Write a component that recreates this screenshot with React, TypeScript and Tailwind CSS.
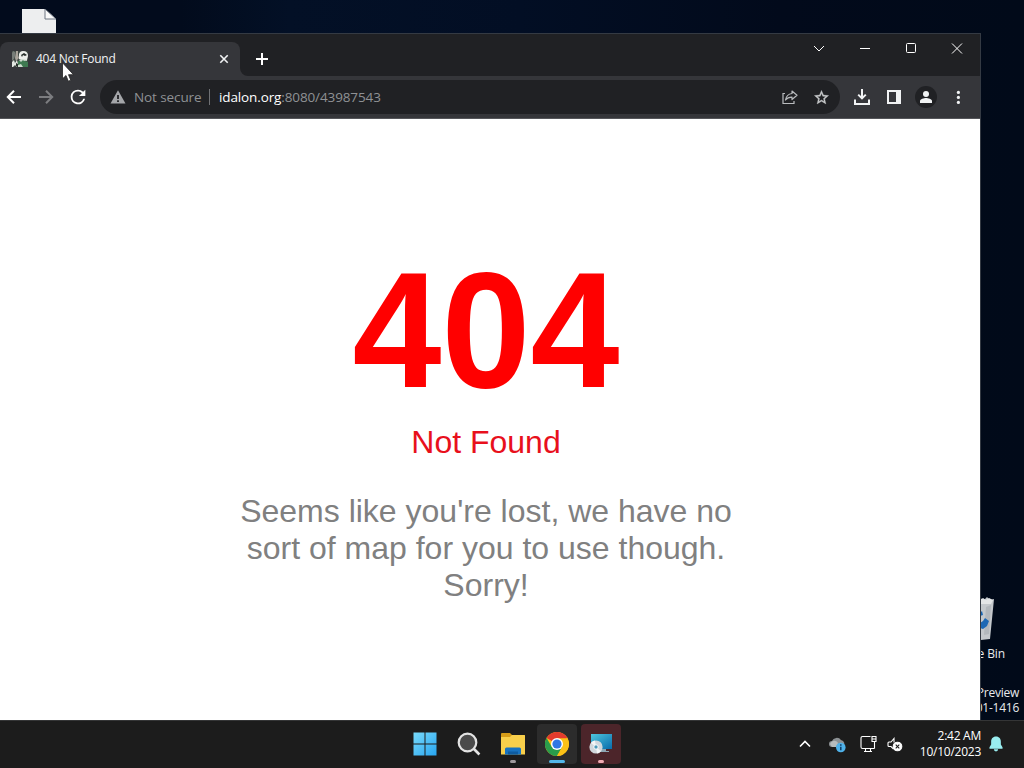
import type { ReactNode } from "react";

const chromeIconButton = "flex h-8 w-8 shrink-0 items-center justify-center text-[#f1f3f4]";

function Favicon() {
  return (
    <svg width="16" height="16" viewBox="0 0 16 16">
      <rect width="16" height="16" fill="#3e4742" />
      <path d="M1 0l2 1v4l-1 3-2 2V2z" fill="#777d78" />
      <path d="M4 0h2v4l1 3-3 3-1-3z" fill="#a9a49b" />
      <path d="M0 11l2-2 1 3 2-3 1 4-1 3-2-2-2 2H0z" fill="#e3e7e2" />
      <path d="M7 3q1-3 4-3 5 0 5 5l-1 4-3 1-5-2z" fill="#eef0ec" />
      <path d="M9 4l3-2 3 2-2 1-2-1-1 2z" fill="#252c28" />
      <path d="M6 10l4-1 6 2v5H6z" fill="#3f7a51" />
      <path d="M7 9l3-1 5 1v1l-4-1-2 2zM6 14l3-1 2 3H6z" fill="#cfdcd0" />
      <path d="M4 12l2 1v3l-2-1z" fill="#29332d" />
    </svg>
  );
}

function Cursor() {
  return (
    <svg className="absolute left-[62px] top-[62px] z-30" width="13" height="20" viewBox="0 0 13 20">
      <path d="M.5 .8v16l3.5-3.3 2.3 5.7 2.5-1-2.3-5.5h5z" fill="#fff" stroke="#222" strokeWidth=".8" />
    </svg>
  );
}

function TabStrip() {
  return (
    <div className="flex h-[42px] bg-[#202124]">
      <div className="mt-2 flex h-[34px] w-[240px] items-center rounded-t-lg bg-[#35363a] pl-3 pr-[10px] text-[#f1f3f4]">
        <Favicon />
        <span className="ml-2 flex-1 whitespace-nowrap text-[12px] tracking-[-0.25px]">404 Not Found</span>
        <svg width="12" height="12" viewBox="0 0 12 12" stroke="currentColor" strokeWidth="1.6">
          <path d="M2.3 2.3l7.4 7.4M9.7 2.3l-7.4 7.4" />
        </svg>
      </div>
      <svg className="mt-[34px]" width="8" height="8" viewBox="0 0 8 8">
        <path d="M0 0a8 8 0 0 0 8 8H0z" fill="#35363a" />
      </svg>
      <svg className="ml-[7px] mt-[18px]" width="14" height="14" viewBox="0 0 14 14" stroke="#fff" strokeWidth="2">
        <path d="M1 7h12M7 1v12" />
      </svg>
      <div className="ml-auto flex h-7 text-white">
        <WindowButton><path d="M1 4l5 5 5-5" /></WindowButton>
        <WindowButton><path d="M1 6.5h10" /></WindowButton>
        <WindowButton><rect x="1.5" y="1.5" width="9" height="9" rx="1" /></WindowButton>
        <WindowButton><path d="M1 1.5l10 10M11 1.5l-10 10" /></WindowButton>
      </div>
    </div>
  );
}

function WindowButton({ children }: { children: ReactNode }) {
  return (
    <button className="flex w-[46px] items-center justify-center">
      <svg width="13" height="13" viewBox="0 0 13 13" fill="none" stroke="currentColor">
        {children}
      </svg>
    </button>
  );
}

function Toolbar() {
  return (
    <div className="flex h-[43px] items-center border-b border-[#55565a] bg-[#35363a] pr-[6px]">
      <button className="flex w-7 justify-center text-white">
        <svg width="16" height="16" viewBox="0 0 16 16" fill="none" stroke="currentColor" strokeWidth="2">
          <path d="M15 8H2M8 1.8L1.8 8 8 14.2" />
        </svg>
      </button>
      <button className="ml-1 flex w-7 justify-center text-[#7c7d80]">
        <svg width="16" height="16" viewBox="0 0 16 16" fill="none" stroke="currentColor" strokeWidth="2">
          <path d="M1 8h13M8 1.8L14.2 8 8 14.2" />
        </svg>
      </button>
      <button className="ml-1 flex w-7 justify-center text-white">
        <svg width="22" height="22" viewBox="0 0 24 24" fill="currentColor">
          <path d="M17.65 6.35A7.96 7.96 0 0 0 12 4a8 8 0 1 0 7.73 10h-2.08A6 6 0 1 1 12 6c1.66 0 3.14.69 4.22 1.78L13 11h7V4z" />
        </svg>
      </button>

      <div className="ml-2 flex h-[34px] w-[740px] items-center rounded-full bg-[#202124] pl-[10px] pr-[2px]">
        <svg width="16" height="16" viewBox="0 0 16 16">
          <path d="M8 1.3L15.5 14.5H.5z" fill="#a4a6a9" />
          <path d="M8 6v4M8 11.2v1.8" stroke="#202124" strokeWidth="1.8" />
        </svg>
        <span className="ml-2 w-[68px] whitespace-nowrap text-[13.5px] tracking-[-0.1px] text-[#8f9194]">Not secure</span>
        <div className="ml-[7px] h-4 w-px bg-[#707174]" />
        <span className="ml-[9px] flex-1 whitespace-nowrap text-[13.5px] tracking-[-0.12px] text-[#8f9194]">
          <span className="text-white">idalon.org</span>:8080/43987543
        </span>
        <div className={chromeIconButton}>
          <svg width="16" height="16" viewBox="0 0 16 16" fill="none" stroke="#b9bbbe" strokeWidth="1.2">
            <path d="M3 4.5H1v10h11V12" />
            <path d="M10 2l5 4.3-5 4.2V8.1C7.2 8 5.2 8.8 3.5 11c.6-3.6 2.6-6 6.5-6.5z" strokeLinejoin="round" />
          </svg>
        </div>
        <div className={chromeIconButton}>
          <svg className="mr-px" width="17" height="17" viewBox="0 0 24 24" fill="#c8cacc" stroke="#c8cacc" strokeWidth=".5">
            <path d="M22 9.24l-7.19-.62L12 2 9.19 8.63 2 9.24l5.46 4.73L5.82 21 12 17.27 18.18 21l-1.63-7.03L22 9.24zM12 15.4l-3.76 2.27 1-4.28-3.32-2.88 4.38-.38L12 6.1l1.71 4.04 4.38.38-3.32 2.88 1 4.28L12 15.4z" />
          </svg>
        </div>
      </div>

      <div className="ml-[6px] flex">
        <button className={chromeIconButton}>
          <svg width="16" height="16" viewBox="0 0 16 16" fill="none" stroke="currentColor" strokeWidth="2">
            <path d="M8 0v9M4.2 5.6L8 9.4l3.8-3.8M1 10.5V15h14v-4.5" />
          </svg>
        </button>
        <button className={chromeIconButton}>
          <svg width="14" height="14" viewBox="0 0 14 14" fill="currentColor">
            <path d="M0 0h14v14H0zM2 2v10h7V2z" fillRule="evenodd" />
          </svg>
        </button>
        <button className={chromeIconButton}>
          <span className="flex h-[22px] w-[22px] items-center justify-center rounded-full bg-[#202124]">
            <svg width="12" height="12" viewBox="0 0 12 12" fill="currentColor">
              <circle cx="6" cy="3" r="3" />
              <path d="M0 12v-2c0-2 4-3 6-3s6 1 6 3v2z" />
            </svg>
          </span>
        </button>
        <button className={chromeIconButton}>
          <svg width="4" height="14" viewBox="0 0 4 14" fill="currentColor">
            <circle cx="2.4" cy="2.4" r="1.6" />
            <circle cx="2.4" cy="7.4" r="1.6" />
            <circle cx="2.4" cy="12.4" r="1.6" />
          </svg>
        </button>
      </div>
    </div>
  );
}

function ErrorPage() {
  return (
    <main className="h-[601px] bg-white pr-2 pt-[119px] text-center font-['Liberation_Sans',Arial,sans-serif]">
      <h1 className="scale-y-[1.035] text-[160px] font-bold leading-[184px] text-[#ff0000]">404</h1>
      <h2 className="mt-[2px] text-[32px] leading-[37px] text-[#e8101c]">Not Found</h2>
      <p className="mx-auto mt-8 w-[500px] text-[32px] leading-[37px] text-[#808080]">
        Seems like you're lost, we have no sort of map for you to use though. Sorry!
      </p>
    </main>
  );
}

function DesktopIcons() {
  return (
    <>
      <svg className="absolute left-[22px] top-[9px]" width="34" height="42" viewBox="0 0 34 42">
        <path d="M0 0h23l11 10v32H0z" fill="#edeeef" />
        <path d="M23 0v10h11z" fill="#f9f9f9" stroke="#6d7580" strokeWidth="1" />
      </svg>
      <svg className="absolute left-[953px] top-[595px]" width="41" height="46" viewBox="0 0 41 46">
        <path d="M0 5l27-2 4 2 3-3 3 3 4-1-4 40-9 1H5z" fill="#c4c8cc" />
        <path d="M27 5l3-2 3 2 3-2 4 2-2 4H27z" fill="#e3e5e6" />
        <path d="M33 12l5-2-2 29-5 1z" fill="#a6abb1" opacity=".6" />
        <path d="M27 18l2-2 1 4-3 1zM27 28l3-2 2-3 4 3-2 5-4 3-3-1z" fill="#1c68b5" />
      </svg>
      <span className="absolute right-[19px] top-[646px] whitespace-nowrap text-[12px] leading-4 tracking-[-0.1px] text-[#e8eaed]">
        Recycle Bin
      </span>
      <div className="absolute right-[5px] top-[685px] whitespace-nowrap text-right text-[12px] leading-[15px] tracking-[-0.25px] text-[#e8eaed]">
        <p>Preview</p>
        <p>01-1416</p>
      </div>
    </>
  );
}

function ChromeLogo() {
  return (
    <svg width="24" height="24" viewBox="0 0 24 24">
      <circle cx="12" cy="12" r="12" fill="#fbc116" />
      <path d="M12 12L1.6 6A12 12 0 0 1 22.4 6z" fill="#e33b2e" />
      <path d="M1.6 6A12 12 0 0 0 12 24l5.2-9L12 12 6.8 15z" fill="#2a9d4b" />
      <path d="M12 6.2h10.5A12 12 0 0 1 12 24l5.2-9z" fill="#fbc116" />
      <circle cx="12" cy="12" r="6" fill="#fff" />
      <circle cx="12" cy="12" r="4.6" fill="#3077e3" />
    </svg>
  );
}

function TaskbarApp({ className = "", indicator = "", children }: { className?: string; indicator?: string; children: ReactNode }) {
  return (
    <div className={`flex h-10 w-10 flex-col items-center rounded pt-[8px] ${className}`}>
      <div className="flex h-6 items-center">{children}</div>
      <span className={`mt-[4px] h-[3px] rounded-full ${indicator}`} />
    </div>
  );
}

function Taskbar() {
  return (
    <footer className="flex h-12 items-start border-t border-[#343536] bg-[#1c1c1c] pl-[405px] pr-[21px] text-white">
      <div className="flex gap-1 pt-[3px]">
        <TaskbarApp>
          <svg width="24" height="24" viewBox="0 0 24 24">
            <defs>
              <linearGradient id="win" x2="1" y2="1">
                <stop stopColor="#79dafb" />
                <stop offset="1" stopColor="#27a5f0" />
              </linearGradient>
            </defs>
            <path d="M.5 .5h11v11H.5zM12.5 .5h11v11h-11zM.5 12.5h11v11H.5zM12.5 12.5h11v11h-11z" fill="url(#win)" />
          </svg>
        </TaskbarApp>
        <TaskbarApp>
          <svg width="24" height="24" viewBox="0 0 24 24" fill="none">
            <circle cx="10.5" cy="10.5" r="8.8" fill="#4b4b4b" stroke="#e3e3e3" strokeWidth="2.2" />
            <path d="M17 17l5.4 5.5" stroke="#e3e3e3" strokeWidth="2.6" />
          </svg>
        </TaskbarApp>
        <TaskbarApp indicator="w-[6px] bg-[#a09a9e]">
          <svg width="26" height="24" viewBox="0 0 26 24">
            <path d="M1 2q0-1 1-1h8l2 2H25v5H1z" fill="#d69c18" />
            <path d="M1 5h9l2-2h12q1 0 1 1v18.5H1z" fill="#f8cf4b" />
            <path d="M5 22.5V17q0-1.5 1.5-1.5h13q1.5 0 1.5 1.5v5.5z" fill="#1772c0" />
            <path d="M8 22.5v-3h10v3z" fill="#0e5b9f" />
          </svg>
        </TaskbarApp>
        <TaskbarApp className="bg-[#2c2c2c]" indicator="w-4 bg-[#53b7e9]">
          <ChromeLogo />
        </TaskbarApp>
        <TaskbarApp className="bg-[#4c252a]" indicator="w-[6px] bg-[#f0acb4]">
          <svg width="24" height="24" viewBox="0 0 24 24">
            <defs>
              <linearGradient id="screen" x2="1" y2="1">
                <stop stopColor="#4fc6de" />
                <stop offset="1" stopColor="#086bab" />
              </linearGradient>
            </defs>
            <path d="M2 2h21v15H2z" fill="url(#screen)" />
            <path d="M12 17h5v2h3v1h-9z" fill="#8da6b3" />
            <circle cx="7" cy="15" r="6.6" fill="#d1d7dc" />
            <path d="M7 15L2 11a6.5 6.5 0 0 1 4-2.5zM7 15l5 4a6.5 6.5 0 0 1-4 2.5z" fill="#f3f5f6" />
            <circle cx="7" cy="15" r="2.2" fill="#4b98b8" stroke="#fff" />
          </svg>
        </TaskbarApp>
      </div>

      <div className="ml-auto flex items-center pt-[7px]">
        <svg width="12" height="8" viewBox="0 0 12 8" fill="none" stroke="currentColor" strokeWidth="1.6">
          <path d="M1 6.5l5-5 5 5" />
        </svg>
        <svg className="ml-[18px] mt-[2px]" width="17" height="16" viewBox="0 0 17 16">
          <path d="M3 10a3 3 0 0 1 0-6 5 4.5 0 0 1 9-1 4 4 0 0 1 2 7z" fill="#8c9194" />
          <path d="M1 7c2-4 6-4 8-1l-2 4H3z" fill="#b8bcbd" />
          <circle cx="11.8" cy="10.5" r="4.8" fill="#4fb2ea" />
          <path d="M11.8 7.3v1.5M11.8 9.7v3.6" stroke="#0c3c66" strokeWidth="1.5" />
        </svg>
        <svg className="ml-[14px]" width="18" height="18" viewBox="0 0 18 18" fill="none" stroke="currentColor" strokeWidth="1.1">
          <path d="M10.5 1.5h-8q-1.5 0-1.5 1.5v9q0 1.5 1.5 1.5h12M5.5 13.5v3M10.5 13.5v3M4 16.5h8" />
          <path d="M12 1.5h4v5h-4zM12 4h4M14.5 6.5v7" />
        </svg>
        <svg className="ml-[9px]" width="16" height="16" viewBox="0 0 16 16" fill="none" stroke="currentColor" strokeWidth="1.1">
          <path d="M6.5 13L4 10.5H2q-1 0-1-1V7q0-1 1-1h2l3-3.5v4" />
          <circle cx="10.5" cy="10.5" r="4.3" fill="#fff" />
          <path d="M8.7 8.7l3.6 3.6M12.3 8.7l-3.6 3.6" stroke="#1c1c1c" />
        </svg>
        <div className="ml-[15px] w-[63px] whitespace-nowrap text-right text-[12px] leading-4 tracking-[-0.25px]">
          <p>2:42 AM</p>
          <p>10/10/2023</p>
        </div>
        <svg className="ml-2" width="14" height="16" viewBox="0 0 15 16" fill="#99edef">
          <path d="M7.5 0C4 0 2.3 2.5 2.3 5.5v3L.5 11.5V13h14v-1.5l-1.8-3v-3C12.7 2.5 11 0 7.5 0zM5.2 13.7h4.6a2.3 2.3 0 0 1-4.6 0z" />
        </svg>
      </div>
    </footer>
  );
}

export default function App() {
  return (
    <div className="relative flex h-[768px] w-[1024px] flex-col overflow-hidden bg-[linear-gradient(90deg,#020b1c_0px,#020b1c_180px,#031026_290px,#020e24_520px,#020a1b_780px,#010a19_1024px)] font-['Open_Sans','Noto_Sans',sans-serif]">
      <DesktopIcons />
      {/* Browser window */}
      <div className="relative mt-[33px] w-[981px] border-r border-t border-[#343a43] bg-[#202124]">
        <TabStrip />
        <Toolbar />
        <ErrorPage />
      </div>
      <Taskbar />
      <Cursor />
    </div>
  );
}
